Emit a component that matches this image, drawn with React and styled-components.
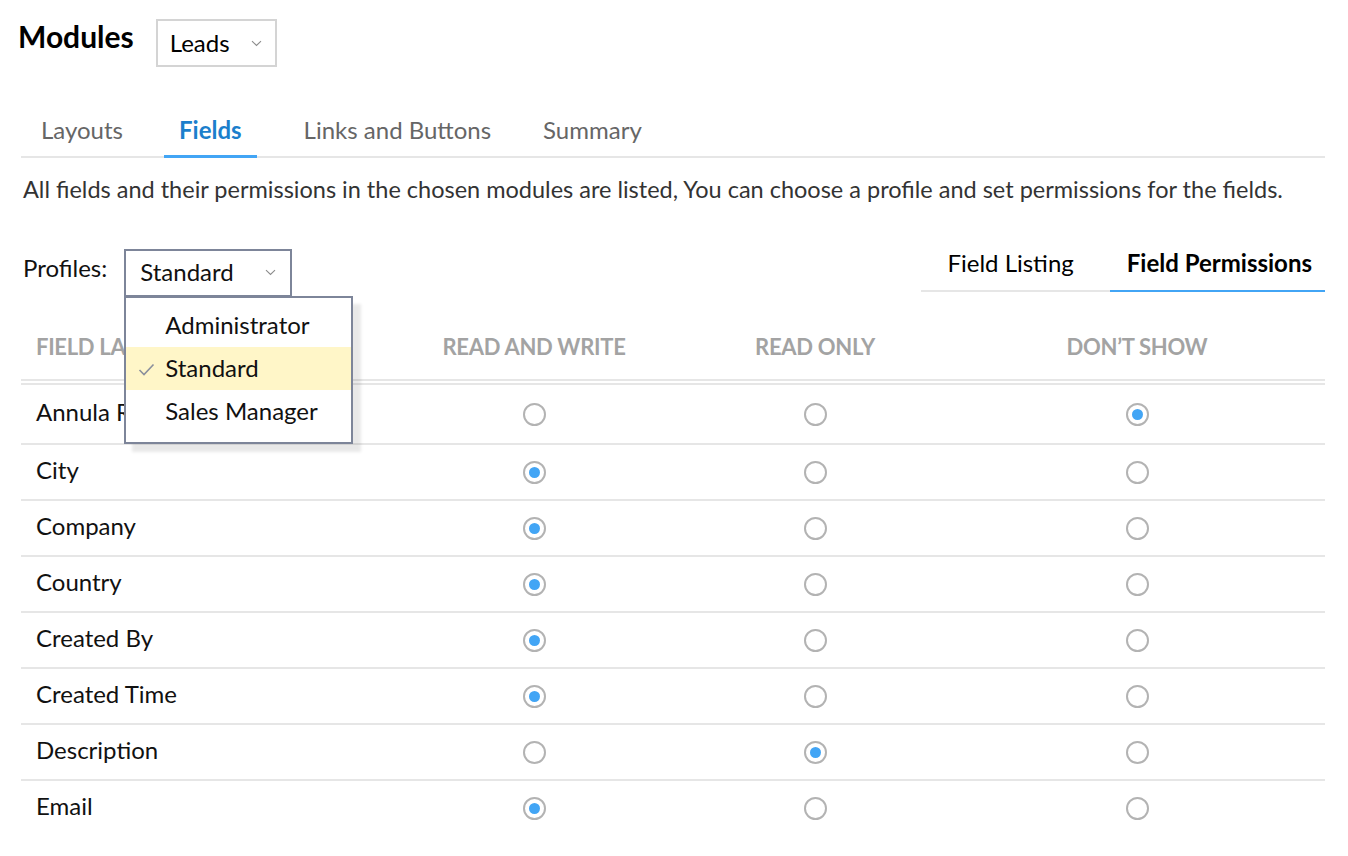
import React from 'react';
import styled, { createGlobalStyle } from 'styled-components';

const GlobalStyle = createGlobalStyle`
  body {
    margin: 0;
    background: #fff;
    font-family: Lato, "Open Sans", sans-serif;
    color: #111;
  }
`;

const fields = [
  { label: 'Annula Revenue', value: 2 },
  { label: 'City', value: 0 },
  { label: 'Company', value: 0 },
  { label: 'Country', value: 0 },
  { label: 'Created By', value: 0 },
  { label: 'Created Time', value: 0 },
  { label: 'Description', value: 1 },
  { label: 'Email', value: 0 },
];

const tabs = [
  { name: 'Layouts', space: 5 },
  { name: 'Fields', space: 26, active: true },
  { name: 'Links and Buttons', space: 32 },
  { name: 'Summary', space: 22 },
];

const profiles = ['Administrator', 'Standard', 'Sales Manager'];

const Chevron = () => (
  <svg width="11" height="7" viewBox="0 0 11 7" fill="none">
    <path d="M1 1.2l4.5 4.3L10 1.2" stroke="#8c8c8c" strokeWidth="1.1" />
  </svg>
);

const Check = () => (
  <svg width="17" height="13" viewBox="0 0 17 13" fill="none">
    <path d="M1.5 7l4.5 4.5L15.5 1.5" stroke="#8a8f9c" strokeWidth="1.6" />
  </svg>
);

const App = () => {
  return (
    <>
      <GlobalStyle />
      <ScPage>
        <ScHeader>
          <ScTitle>Modules</ScTitle>
          <ScModuleSelect>
            <span>Leads</span>
            <Chevron />
          </ScModuleSelect>
        </ScHeader>

        <ScTabs>
          {tabs.map((t) => (
            <ScTab key={t.name} active={t.active} space={t.space}>
              {t.name}
            </ScTab>
          ))}
        </ScTabs>

        <ScInfo>
          All fields and their permissions in the chosen modules are listed, You can choose a profile and set permissions for the fields.
        </ScInfo>

        <ScToolbar>
          <ScProfileBox>
            <ScLabel>Profiles:</ScLabel>
            <ScSelectWrap>
              <ScProfileSelect>
                <span>Standard</span>
                <Chevron />
              </ScProfileSelect>
              <ScMenu>
                {profiles.map((p) => (
                  <ScMenuItem key={p} selected={p === 'Standard'}>
                    <ScCheckSlot>{p === 'Standard' && <Check />}</ScCheckSlot>
                    {p}
                  </ScMenuItem>
                ))}
              </ScMenu>
            </ScSelectWrap>
          </ScProfileBox>
          <ScViewTabs>
            <ScViewTab>Field Listing</ScViewTab>
            <ScViewTab active>Field Permissions</ScViewTab>
          </ScViewTabs>
        </ScToolbar>

        <ScTable>
          <ScHeadRow>
            <ScHeadCell left>FIELD LABEL</ScHeadCell>
            <ScHeadCell>READ AND WRITE</ScHeadCell>
            <ScHeadCell>READ ONLY</ScHeadCell>
            <ScHeadCell>DON’T SHOW</ScHeadCell>
          </ScHeadRow>
          {fields.map((f, i) => (
            <ScRow key={f.label} first={i === 0}>
              <ScFieldName>{f.label}</ScFieldName>
              {[0, 1, 2].map((c) => (
                <ScRadioCell key={c}>
                  <ScRadio checked={f.value === c} />
                </ScRadioCell>
              ))}
            </ScRow>
          ))}
        </ScTable>
      </ScPage>
    </>
  );
};

const ScPage = styled.div`
  width: 1304px;
  padding: 16px 0 0 21px;
`;

const ScHeader = styled.div`
  display: flex;
  align-items: flex-start;
  gap: 22px;
  margin-left: -3px;
`;

const ScTitle = styled.h1`
  margin: 0;
  font-size: 30px;
  line-height: 40px;
  font-weight: 700;
  color: #000;
`;

const ScModuleSelect = styled.div`
  box-sizing: border-box;
  margin-top: 3px;
  width: 121px;
  height: 48px;
  border: 2px solid #d4d4d4;
  display: flex;
  align-items: center;
  justify-content: space-between;
  padding: 0 13px 0 12px;
  font-size: 24px;
  line-height: 30px;
  color: #000;
`;

const ScTabs = styled.div`
  display: flex;
  margin-top: 48px;
  border-bottom: 2px solid #e6e6e6;
`;

const ScTab = styled.div`
  font-size: 24px;
  line-height: 30px;
  padding: 0 15px 10px;
  margin-left: ${(p) => p.space}px;
  margin-bottom: -2px;
  color: ${(p) => (p.active ? '#1b7fcc' : '#666')};
  font-weight: ${(p) => (p.active ? 700 : 400)};
  border-bottom: 3px solid ${(p) => (p.active ? '#42a5f5' : 'transparent')};
`;

const ScInfo = styled.p`
  margin: 16px 0 0 2px;
  font-size: 23.5px;
  line-height: 30px;
  color: #333;
  white-space: nowrap;
`;

const ScToolbar = styled.div`
  display: flex;
  justify-content: space-between;
  align-items: flex-start;
  margin-top: 45px;
`;

const ScProfileBox = styled.div`
  display: flex;
  align-items: flex-start;
  gap: 17px;
  padding-left: 2px;
`;

const ScLabel = styled.span`
  font-size: 24px;
  line-height: 30px;
  color: #111;
  margin-top: 4px;
`;

const ScSelectWrap = styled.div`
  position: relative;
`;

const ScProfileSelect = styled.div`
  box-sizing: border-box;
  width: 168px;
  height: 48px;
  border: 2px solid #7d8599;
  display: flex;
  align-items: center;
  justify-content: space-between;
  padding: 0 14px 2px 14px;
  font-size: 24px;
  line-height: 30px;
  color: #111;
  background: #fff;
`;

const ScMenu = styled.div`
  position: absolute;
  z-index: 2;
  left: 0;
  top: 47px;
  box-sizing: border-box;
  width: 229px;
  border: 2px solid #7d8599;
  background: #fff;
  padding: 6px 0 9px;
  box-shadow: 8px 8px 3px rgba(0, 0, 0, 0.09);
`;

const ScMenuItem = styled.div`
  display: flex;
  align-items: center;
  height: 43px;
  padding-left: 12px;
  padding-bottom: 2px;
  box-sizing: border-box;
  font-size: 24px;
  color: #111;
  background: ${(p) => (p.selected ? '#fff6c8' : 'transparent')};
`;

const ScCheckSlot = styled.span`
  width: 27px;
  display: flex;
  align-items: center;
  padding-top: 3px;
`;

const ScViewTabs = styled.div`
  display: flex;
  margin-top: -1px;
  border-bottom: 2px solid #e6e6e6;
`;

const ScViewTab = styled.div`
  font-size: 24px;
  line-height: 30px;
  padding: 0 ${(p) => (p.active ? '13px' : '36px')} 12px ${(p) => (p.active ? '17px' : '26px')};
  margin-bottom: -2px;
  color: #000;
  font-weight: ${(p) => (p.active ? 700 : 400)};
  border-bottom: 2px solid ${(p) => (p.active ? '#42a5f5' : 'transparent')};
`;

const ScTable = styled.div`
  margin-top: 35px;
`;

const ScHeadRow = styled.div`
  display: grid;
  grid-template-columns: 373px 280px 282px 1fr;
  align-items: start;
  padding-bottom: 17px;
  border-bottom: 6px double #e6e6e6;
`;

const ScHeadCell = styled.div`
  font-size: 22px;
  line-height: 30px;
  font-weight: 700;
  color: #a3a3a3;
  letter-spacing: -0.3px;
  text-align: ${(p) => (p.left ? 'left' : 'center')};
  padding-left: ${(p) => (p.left ? '15px' : '0')};
  &:last-child {
    padding-right: 7px;
  }
`;

const ScRow = styled.div`
  display: grid;
  grid-template-columns: 373px 280px 282px 1fr;
  align-items: center;
  height: ${(p) => (p.first ? '58px' : '54px')};
  border-bottom: 2px solid #e6e6e6;
  &:last-child {
    border-bottom: none;
  }
`;

const ScFieldName = styled.div`
  font-size: 24px;
  line-height: 30px;
  color: #111;
  padding-left: 15px;
  margin-top: -5px;
`;

const ScRadioCell = styled.div`
  display: flex;
  justify-content: center;
  &:last-child {
    padding-right: 7px;
  }
`;

const ScRadio = styled.span`
  box-sizing: border-box;
  width: 23px;
  height: 23px;
  border-radius: 50%;
  border: 2px solid #b3b3b3;
  display: flex;
  align-items: center;
  justify-content: center;
  &::after {
    content: '';
    width: 11px;
    height: 11px;
    border-radius: 50%;
    background: ${(p) => (p.checked ? '#42a5f5' : 'transparent')};
  }
`;

export default App;
